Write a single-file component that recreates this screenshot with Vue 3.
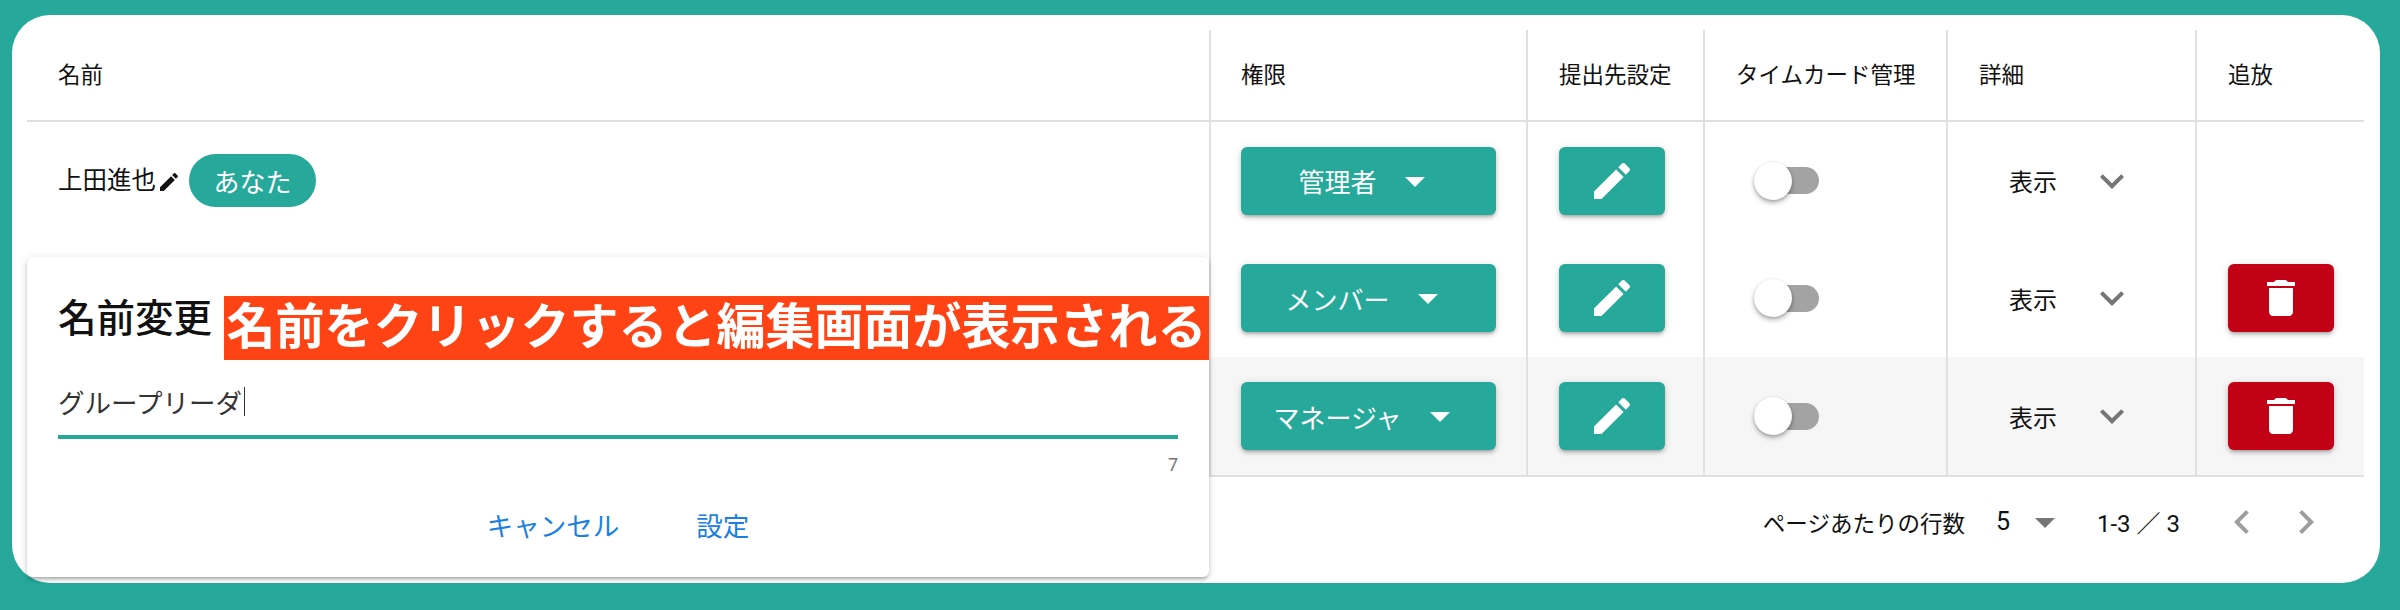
<script setup>
const COLUMNS = ["名前", "権限", "提出先設定", "タイムカード管理", "詳細", "追放"];

const ROWS = [
  { id: 1, name: "上田進也", role: "管理者", self: true, removable: false },
  { id: 2, name: "", role: "メンバー", self: false, removable: true },
  { id: 3, name: "", role: "マネージャ", self: false, removable: true }
];

const EDIT_PATH =
  "M3 17.25V21h3.75L17.81 9.94l-3.75-3.75L3 17.25zM20.71 7.04c.39-.39.39-1.02 0-1.41l-2.34-2.34c-.39-.39-1.02-.39-1.41 0l-1.83 1.83 3.75 3.75 1.83-1.83z";
const TRASH_PATH = "M6 19c0 1.1.9 2 2 2h8c1.1 0 2-.9 2-2V7H6v12zM19 4h-3.5l-1-1h-5l-1 1H5v2h14V4z";
const CARET_PATH = "M7 10l5 5 5-5z";
</script>

<template>
  <div class="page">
    <div class="card">
      <div class="row head">
        <div v-for="c in COLUMNS" :key="c" class="cell"><span class="head-label">{{ c }}</span></div>
      </div>

      <div v-for="r in ROWS" :key="r.id" class="row" :class="{ hover: r.id === 3 }">
        <div class="cell name-cell">
          <template v-if="r.self">
            <span class="name-text">{{ r.name }}</span>
            <svg class="name-edit" viewBox="0 0 24 24"><path :d="EDIT_PATH" /></svg>
            <span class="chip">あなた</span>
          </template>
        </div>
        <div class="cell">
          <button class="btn role-btn">
            <span>{{ r.role }}</span>
            <svg class="icon48" viewBox="0 0 24 24"><path :d="CARET_PATH" /></svg>
          </button>
        </div>
        <div class="cell">
          <button class="btn icon-btn">
            <svg class="icon48" viewBox="0 0 24 24"><path :d="EDIT_PATH" /></svg>
          </button>
        </div>
        <div class="cell switch-cell">
          <span class="switch"><span class="knob"></span></span>
        </div>
        <div class="cell detail-cell">
          <span>表示</span>
          <svg class="icon48 chevron" viewBox="0 0 24 24"><path d="M16.59 8.59L12 13.17 7.41 8.59 6 10l6 6 6-6z" /></svg>
        </div>
        <div class="cell">
          <button v-if="r.removable" class="btn icon-btn danger">
            <svg class="icon48" viewBox="0 0 24 24"><path :d="TRASH_PATH" /></svg>
          </button>
        </div>
      </div>

      <div class="pager">
        <span>ページあたりの行数</span>
        <span class="per-page">5</span>
        <svg class="icon48 pager-caret" viewBox="0 0 24 24"><path :d="CARET_PATH" /></svg>
        <span class="range">1-3 ／ 3</span>
        <svg class="icon48 nav prev" viewBox="0 0 24 24"><path d="M15.41 7.41L14 6l-6 6 6 6 1.41-1.41L10.83 12z" /></svg>
        <svg class="icon48 nav next" viewBox="0 0 24 24"><path d="M10 6L8.59 7.41 13.17 12l-4.58 4.58L10 18l6-6z" /></svg>
      </div>

      <div class="dialog">
        <div class="dialog-title">名前変更</div>
        <div class="note">名前をクリックすると編集画面が表示される</div>
        <div class="field">
          <span>グループリーダ</span><span class="text-caret"></span>
        </div>
        <div class="counter">7</div>
        <div class="actions">
          <span>キャンセル</span>
          <span>設定</span>
        </div>
      </div>
    </div>
  </div>
</template>

<style>
html,
body {
  margin: 0;
  background: #26a99b;
}
</style>

<style scoped>
.page {
  box-sizing: border-box;
  width: 2400px;
  height: 610px;
  padding: 15px 20px 27px 12px;
  background: #26a99b;
  font-family: Roboto, "Noto Sans CJK JP", sans-serif;
  color: #111;
}
.card {
  position: relative;
  box-sizing: border-box;
  height: 568px;
  padding: 15px 16px 0 15px;
  background: #fff;
  border-radius: 38px;
}
.row {
  display: grid;
  grid-template-columns: 1182px 317px 177px 243px 249px 169px;
  height: 117.67px;
}
.row.hover {
  background: #f6f6f6;
  height: 119.67px;
  border-bottom: 2px solid #e0e0e0;
  box-sizing: border-box;
}
.head {
  box-sizing: border-box;
  height: 92px;
  border-bottom: 2px solid #e0e0e0;
  font-size: 22.5px;
}
.head-label {
  margin-top: -5px;
}
.cell {
  display: flex;
  align-items: center;
  box-sizing: border-box;
  padding-left: 31px;
  border-left: 2px solid #e0e0e0;
  min-width: 0;
}
.cell:first-child {
  border-left: none;
  padding-left: 31px;
}
.cell:nth-child(2) {
  padding-left: 30px;
}
.name-cell {
  font-size: 24.5px;
}
.name-text {
  margin-top: -5px;
}
.name-edit {
  width: 24px;
  height: 24px;
  margin: 2px 0 0 1px;
  fill: #111;
  flex: none;
}
.chip {
  display: flex;
  align-items: center;
  justify-content: center;
  width: 127px;
  height: 53px;
  margin-left: 8px;
  border-radius: 27px;
  background: #26a99b;
  color: #fff;
  font-size: 26px;
}
.btn {
  display: flex;
  align-items: center;
  justify-content: center;
  height: 68px;
  padding: 0;
  border: none;
  border-radius: 6px;
  background: #26a99b;
  color: #fff;
  font-family: inherit;
  font-size: 26px;
  box-shadow: 0 3px 3px -2px rgba(0, 0, 0, 0.2), 0 3px 4px rgba(0, 0, 0, 0.14), 0 1px 8px rgba(0, 0, 0, 0.12);
}
.role-btn {
  width: 255px;
  gap: 14px;
}
.icon-btn {
  width: 106px;
}
.danger {
  background: #c20016;
}
.icon48 {
  width: 48px;
  height: 48px;
  flex: none;
  fill: #fff;
}
.cell.switch-cell {
  padding-left: 49px;
}
.switch {
  position: relative;
  display: block;
  width: 60px;
  height: 27px;
  margin-left: 5px;
  border-radius: 14px;
  background: #a3a3a3;
}
.knob {
  position: absolute;
  left: -5px;
  top: -5.5px;
  width: 38px;
  height: 38px;
  border-radius: 50%;
  background: #fff;
  box-shadow: 0 3px 5px rgba(0, 0, 0, 0.28), 0 1px 3px rgba(0, 0, 0, 0.16);
}
.cell.detail-cell {
  padding-left: 61px;
  font-size: 24px;
}
.chevron {
  margin-left: 31px;
  fill: #757575;
}
.pager {
  display: flex;
  align-items: center;
  justify-content: flex-end;
  height: 90px;
  font-size: 22.5px;
  padding-right: 34px;
}
.per-page {
  margin-left: 31px;
  font-size: 25px;
}
.pager-caret {
  margin-left: 11px;
  fill: #757575;
}
.range {
  margin-left: 28px;
  font-size: 24px;
}
.nav {
  fill: #9e9e9e;
}
.prev {
  margin-left: 38px;
}
.next {
  margin-left: 16px;
}
.dialog {
  position: absolute;
  left: 15px;
  top: 242px;
  display: flex;
  flex-direction: column;
  box-sizing: border-box;
  width: 1182px;
  height: 320px;
  padding: 0 31px;
  background: #fff;
  border-radius: 6px;
  box-shadow: 0 3px 3px -2px rgba(0, 0, 0, 0.2), 0 3px 4px rgba(0, 0, 0, 0.14), 0 1px 8px rgba(0, 0, 0, 0.12);
}
.dialog-title {
  margin-top: 34px;
  font-size: 38.5px;
  line-height: 56px;
  font-weight: 500;
}
.note {
  position: absolute;
  left: 197px;
  top: 39px;
  width: 985px;
  height: 64px;
  background: #ff4314;
  color: #fff;
  font-size: 49px;
  line-height: 64px;
  font-weight: 700;
  text-align: center;
  white-space: nowrap;
}
.field {
  display: flex;
  align-items: center;
  box-sizing: content-box;
  width: 1120px;
  height: 46px;
  margin-top: 31px;
  padding-bottom: 11px;
  border-bottom: 4px solid #26a99b;
  font-size: 26.5px;
  color: #333;
}
.text-caret {
  width: 1px;
  height: 29px;
  margin-left: 2px;
  background: #333;
}
.counter {
  width: 1120px;
  margin-top: 15px;
  text-align: right;
  font-size: 18px;
  line-height: 22px;
  color: #757575;
}
.actions {
  display: flex;
  justify-content: center;
  gap: 77px;
  margin-top: 32px;
  font-size: 26.5px;
  line-height: 38px;
  color: #1a7fe0;
}
</style>
